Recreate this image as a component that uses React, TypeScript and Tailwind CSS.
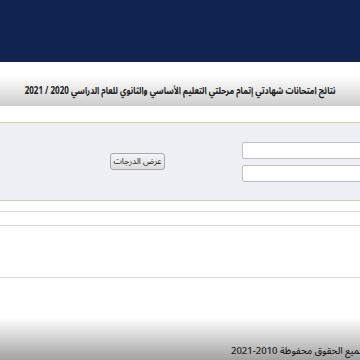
import React from 'react';

const arabic = { fontFamily: "'Noto Sans Arabic', 'DejaVu Sans', sans-serif" };

const App = () => {
  return (
    <div className="w-[360px] h-[360px] overflow-hidden bg-white flex flex-col" style={arabic}>
      {/* Header */}
      <div className="h-[62px] shrink-0 bg-[#10244f]" />

      {/* Title bar */}
      <div className="mt-[14px] h-[30px] shrink-0 bg-gradient-to-b from-white to-[#cdcdcd] flex items-center justify-end pr-[25px] overflow-hidden">
        <p
          dir="rtl"
          className="whitespace-nowrap text-[10px] font-bold text-[#1a1a1a] leading-none scale-x-[0.8] origin-right"
        >
          نتائج امتحانات شهادتي إتمام مرحلتي التعليم الأساسي والثانوي للعام الدراسي 2020 / 2021
        </p>
      </div>

      {/* Search panel */}
      <div className="mt-[16px] h-[79px] shrink-0 bg-[#eef0f5] border-y border-[#c9d2a8] flex items-center">
        <div className="w-[110px] shrink-0" />
        <button className="w-[55px] h-[17px] shrink-0 rounded-[3px] border border-[#a9a9a9] bg-gradient-to-b from-[#f4f4f4] to-[#dedede] text-[8.5px] text-[#222] flex items-center justify-center leading-none whitespace-nowrap">
          عرض الدرجات
        </button>
        <div className="w-[77px] shrink-0" />
        <div className="flex flex-col gap-[6px] shrink-0">
          <input className="w-[160px] h-[17px] bg-white border border-[#bfbfbf] rounded-[2px]" />
          <input className="w-[160px] h-[17px] bg-white border border-[#bfbfbf] rounded-[2px]" />
        </div>
      </div>

      {/* Empty rows */}
      <div className="mt-[10px] h-[14px] shrink-0 border-t border-[#d8d8d8]" />
      <div className="h-[52px] shrink-0 border-t border-[#d8d8d8]" />
      <div className="h-[41px] shrink-0 border-t border-[#d8d8d8]" />

      {/* Footer */}
      <div className="flex-1 bg-gradient-to-b from-white to-[#a3a3a3] flex items-end pl-[231px] pb-[3px] overflow-hidden">
        <p dir="rtl" className="whitespace-nowrap text-[9.5px] font-medium text-[#1a1a1a] leading-[12px] shrink-0">
          جميع الحقوق محفوظة 2010-2021
        </p>
      </div>
    </div>
  );
};

export default App;
